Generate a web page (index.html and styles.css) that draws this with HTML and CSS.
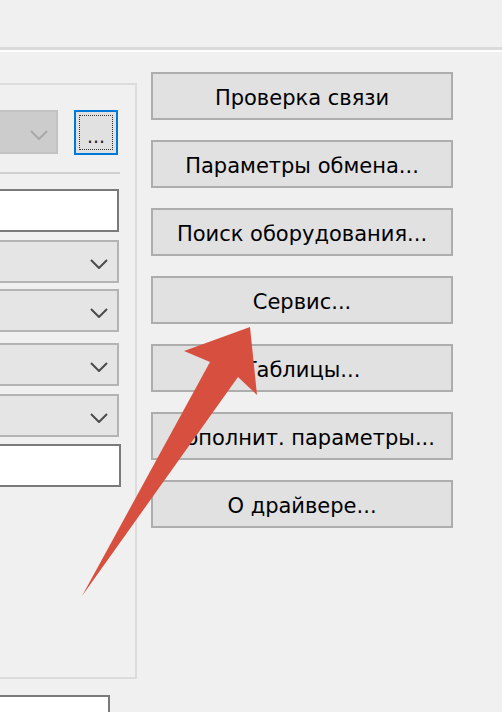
FILE: index.html
```html
<!DOCTYPE html>
<html lang="ru">
<head>
  <meta charset="UTF-8">
  <title>Свойства драйвера</title>
  <link rel="stylesheet" href="styles.css">
</head>
<body>
  <div class="top"></div>
  <div class="sep"></div>
  <div class="main">
    <div class="left">
      <div class="group">
        <div class="row">
          <div class="combo disabled">
            <svg class="chev" width="18" height="10" viewBox="0 0 18 10"><polyline points="1,1 9,9 17,1" fill="none" stroke="#a9a9a9" stroke-width="2"/></svg>
          </div>
          <div class="browse"><span class="focus">...</span></div>
        </div>
        <div class="rule"></div>
        <div class="edit first"></div>
        <div class="combo c1">
          <svg class="chev" width="18" height="10" viewBox="0 0 18 10"><polyline points="1,1 9,9 17,1" fill="none" stroke="#4a4a4a" stroke-width="2"/></svg>
        </div>
        <div class="combo c2">
          <svg class="chev" width="18" height="10" viewBox="0 0 18 10"><polyline points="1,1 9,9 17,1" fill="none" stroke="#4a4a4a" stroke-width="2"/></svg>
        </div>
        <div class="combo c3">
          <svg class="chev" width="18" height="10" viewBox="0 0 18 10"><polyline points="1,1 9,9 17,1" fill="none" stroke="#4a4a4a" stroke-width="2"/></svg>
        </div>
        <div class="combo c4">
          <svg class="chev" width="18" height="10" viewBox="0 0 18 10"><polyline points="1,1 9,9 17,1" fill="none" stroke="#4a4a4a" stroke-width="2"/></svg>
        </div>
        <div class="edit last"></div>
      </div>
      <div class="edit bottom"></div>
    </div>
    <div class="buttons">
      <button class="btn">Проверка связи</button>
      <button class="btn">Параметры обмена...</button>
      <button class="btn">Поиск оборудования...</button>
      <button class="btn">Сервис...</button>
      <button class="btn">Таблицы...</button>
      <button class="btn">Дополнит. параметры...</button>
      <button class="btn">О драйвере...</button>
    </div>
  </div>
  <svg class="arrow" width="502" height="712" viewBox="0 0 502 712">
    <polygon points="250,327 184,351 210,362 82,596 238,377 257,395" fill="#d7503f"/>
  </svg>
</body>
</html>
```

FILE: styles.css
```css
body {
  margin: 0;
  background: #f0f0f0;
  font-family: 'DejaVu Sans', Verdana, sans-serif;
  color: #000;
  position: relative;
  height: 712px;
  overflow: hidden;
}
.top {
  height: 47px;
}
.sep {
  border-top: 3px solid #dadada;
  border-bottom: 2px solid #fff;
}
.main {
  display: flex;
}
.left {
  width: 137px;
  margin-top: 31px;
}
.group {
  height: 596px;
  box-sizing: border-box;
  border: 2px solid #dcdcdc;
  border-left: none;
  padding: 25px 15px 0 0;
}
.row {
  display: flex;
  gap: 16px;
  height: 45px;
}
.combo {
  position: relative;
  height: 43px;
  width: 119px;
  background: #e5e5e5;
  border: 2px solid #b4b4b4;
  border-left: none;
  box-sizing: border-box;
}
.combo .chev {
  position: absolute;
  right: 9px;
  top: 17px;
}
.combo.disabled {
  width: 58px;
  height: 44px;
  background: #cccccc;
  border-color: #c2c2c2;
}
.combo.disabled .chev {
  right: 8px;
  top: 18px;
}
.browse {
  width: 44px;
  height: 45px;
  box-sizing: border-box;
  border: 2px solid #0078d7;
  background: #e1e1e1;
  padding: 3px;
}
.focus {
  display: flex;
  align-items: flex-end;
  justify-content: center;
  height: 100%;
  box-sizing: border-box;
  border: 1px dotted #333;
  font-size: 19px;
  line-height: 1;
  padding-bottom: 3px;
  color: #222;
}
.rule {
  width: 120px;
  margin-top: 17px;
  border-top: 2px solid #cfcfcf;
}
.edit {
  background: #fff;
  border: 2px solid #7a7a7a;
  border-left: none;
  box-sizing: border-box;
  height: 43px;
  width: 119px;
}
.edit.first {
  margin-top: 15px;
}
.c1 { margin-top: 8px; }
.c2 { margin-top: 6px; }
.c3 { margin-top: 11px; }
.c4 { margin-top: 8px; }
.edit.last {
  margin-top: 7px;
  width: 121px;
}
.edit.bottom {
  margin-top: 16px;
  width: 110px;
  height: 40px;
  border-bottom: none;
}
.buttons {
  display: flex;
  flex-direction: column;
  gap: 20px;
  margin-left: 14px;
  padding-top: 20px;
}
.btn {
  width: 302px;
  height: 48px;
  background: #e1e1e1;
  border: 2px solid #adadad;
  font-family: inherit;
  font-size: 21px;
  color: #000;
  padding: 3px 0 0 0;
}
.arrow {
  position: absolute;
  left: 0;
  top: 0;
  pointer-events: none;
}
```
